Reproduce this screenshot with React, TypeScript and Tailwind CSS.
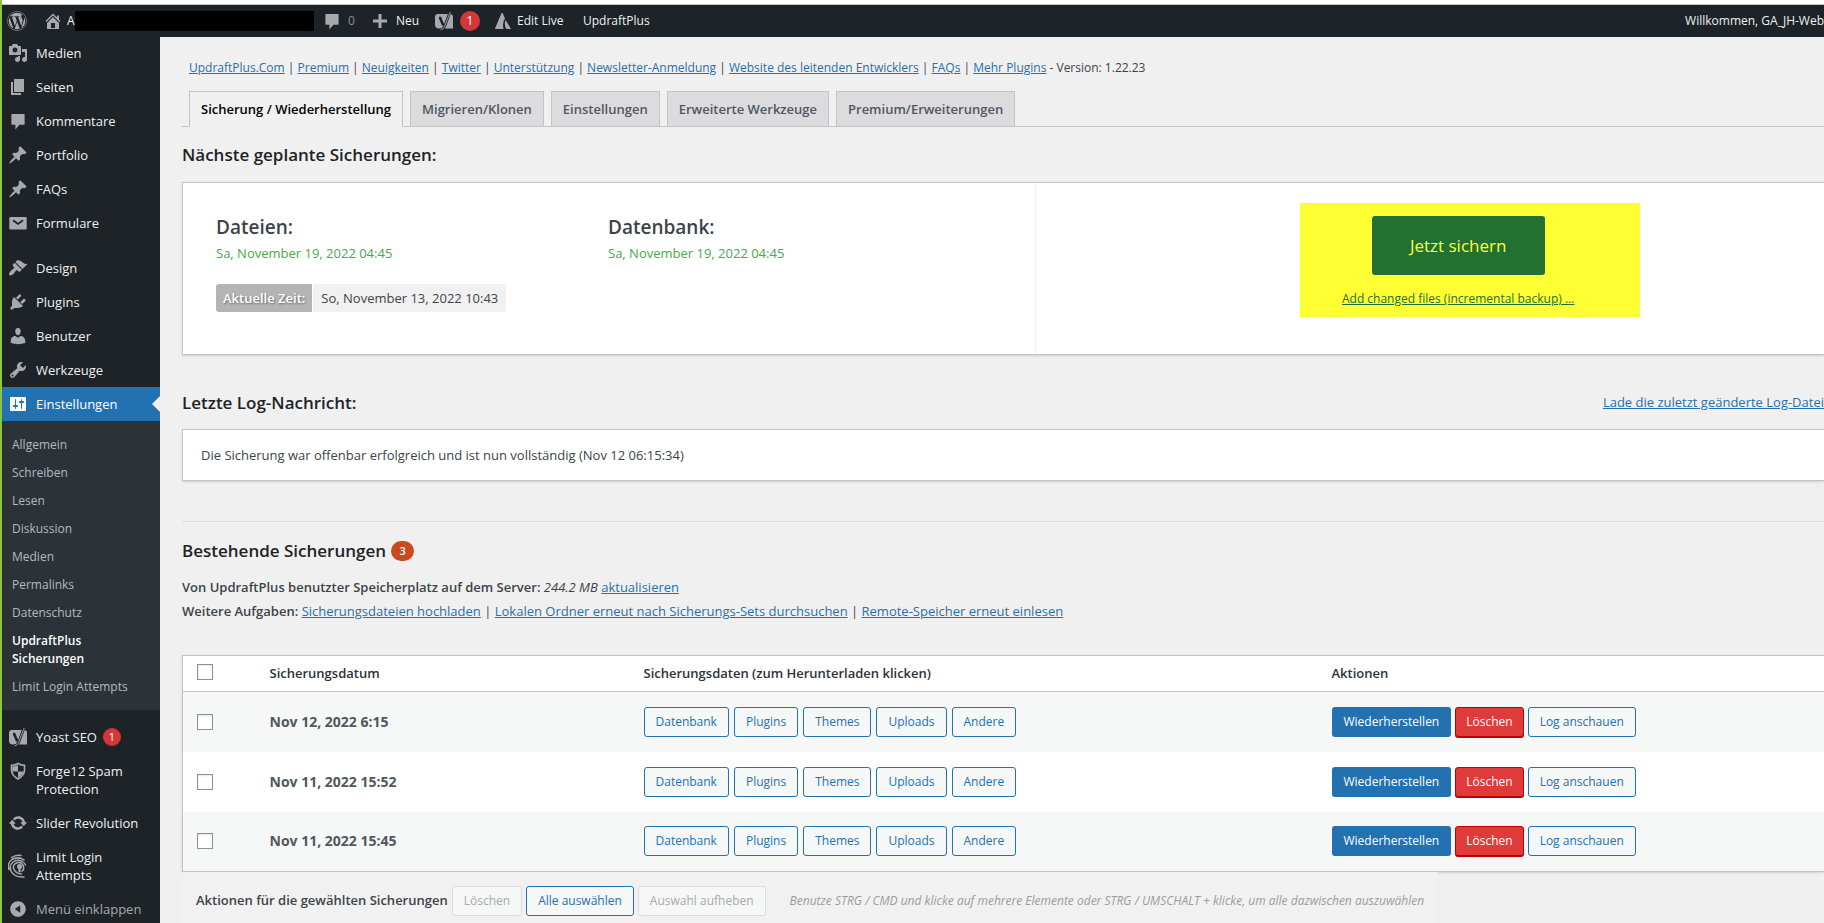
import React from 'react'
import { FaWordpress } from 'react-icons/fa'

const icons: Record<string, string> = {
  media: 'M13 11V4c0-.55-.45-1-1-1h-1.67L9 1H5L3.67 3H2c-.55 0-1 .45-1 1v7c0 .55.45 1 1 1h10c.55 0 1-.45 1-1zM7 4.5c1.38 0 2.5 1.12 2.5 2.5S8.38 9.5 7 9.5 4.5 8.38 4.5 7 5.62 4.5 7 4.5zM14 6h5v10.5c0 1.38-1.12 2.5-2.5 2.5S14 17.88 14 16.5s1.12-2.5 2.5-2.5c.17 0 .34.02.5.05V9h-3V6zm-4 8.05V13h2v3.5c0 1.38-1.12 2.5-2.5 2.5S7 17.88 7 16.5 8.12 14 9.5 14c.17 0 .34.02.5.05z',
  page: 'M6 15V2h10v13H6zm-1 1h8v2H3V5h2v11z',
  comment: 'M4 3h12q.6 0 .6.6V13q0 .8-.8.8H11.500L7.400 18.500V13.800H4.200Q3.400 13.800 3.400 13V3.600Q3.400 3 4 3z',
  pin: 'M10.44 3.02l1.82-1.82 6.36 6.35-1.83 1.82c-1.05-.68-2.48-.57-3.41.36l-.75.75c-.92.93-1.04 2.35-.35 3.41l-1.83 1.82-2.41-2.41-2.8 2.79c-.42.42-3.38 2.71-3.8 2.29s1.86-3.39 2.28-3.81l2.79-2.79L4.1 9.36l1.83-1.82c1.05.69 2.48.57 3.4-.36l.75-.75c.93-.92 1.05-2.35.36-3.41z',
  brush: 'M14.48 11.06L7.41 3.99l1.5-1.5c.5-.56 2.3-.47 3.51.32 1.21.8 1.43 1.28 2.91 2.1 1.18.64 2.45 1.26 4.45.85zm-.71.71L6.7 4.7 4.93 6.47c-.39.39-.39 1.02 0 1.41l1.06 1.06c.39.39.39 1.03 0 1.42-.6.6-1.43 1.11-2.21 1.69-.35.26-.7.53-1.01.84C1.43 14.23.4 16.08 1.4 17.07c.99 1 2.84-.03 4.18-1.36.31-.31.58-.66.85-1.02.57-.78 1.08-1.61 1.69-2.21.39-.39 1.02-.39 1.41 0l1.06 1.06c.39.39 1.02.39 1.41 0z',
  plug: 'M13.11 4.36L9.87 7.6 8 5.73l3.24-3.24c.35-.34 1.05-.2 1.56.32.52.51.66 1.21.31 1.55zm-8 1.77l.91-1.12 9.01 9.01-1.19.84c-.71.71-2.63 1.16-3.82 1.16H6.14L4.9 17.26c-.59.59-1.54.59-2.12 0-.59-.58-.59-1.53 0-2.12l1.24-1.24v-3.88c0-1.13.4-3.19 1.09-3.89zm7.26 3.97l3.24-3.24c.34-.35 1.04-.21 1.55.31.52.51.66 1.21.31 1.55l-3.24 3.25z',
  user: 'M10 9.25c-2.27 0-2.73-3.44-2.73-3.44C7 4.02 7.82 2 9.97 2c2.16 0 2.98 2.02 2.71 3.81 0 0-.41 3.44-2.68 3.44zm0 2.57L12.72 10c2.39 0 4.52 2.33 4.52 4.53v2.49s-3.65 1.13-7.24 1.13c-3.65 0-7.24-1.13-7.24-1.13v-2.49c0-2.25 1.94-4.48 4.47-4.48z',
  wrench: 'M16.68 9.77c-1.34 1.34-3.3 1.67-4.95.99l-5.41 6.52c-.99.99-2.59.99-3.58 0s-.99-2.59 0-3.57l6.52-5.42c-.68-1.65-.35-3.61.99-4.95 1.28-1.28 3.12-1.62 4.72-1.06l-2.89 2.89 2.82 2.82 2.86-2.87c.53 1.58.18 3.39-1.08 4.65zM3.81 16.21c.4.39 1.04.39 1.43 0 .4-.4.4-1.04 0-1.43-.39-.4-1.03-.4-1.43 0-.39.39-.39 1.03 0 1.43z',
  settings: 'M18 16V4c0-.55-.45-1-1-1H3c-.55 0-1 .45-1 1v12c0 .55.45 1 1 1h14c.55 0 1-.45 1-1zM8 11h1c.55 0 1 .45 1 1s-.45 1-1 1H8v1.500c0 .28-.22.5-.5.5s-.5-.22-.5-.5V13H6c-.55 0-1-.45-1-1s.45-1 1-1h1V5.500c0-.28.22-.5.5-.5s.5.22.5.5V11zm5-2h-1c-.55 0-1-.45-1-1s.45-1 1-1h1V5.500c0-.28.22-.5.5-.5s.5.22.5.5V7h1c.55 0 1 .45 1 1s-.45 1-1 1h-1v5.500c0 .28-.22.5-.5.5s-.5-.22-.5-.5V9z',
  home: 'M16 8.500l1.530 1.530-1.060 1.060L10 4.600l-6.470 6.470-1.060-1.060L10 2.500l4 4v-2h2v4zm-6-2.460l6 5.990V18H4v-5.970zM12 17v-5H8v5h4z',
  plus: 'M17 8.500v3h-5.500V17h-3v-5.500H3v-3h5.500V3h3v5.500z',
  update: 'M10.2 3.28c3.53 0 6.43 2.61 6.92 6h2.08l-3.5 4-3.5-4h2.32c-.45-1.97-2.21-3.45-4.32-3.45-1.45 0-2.73.71-3.54 1.78L4.95 5.66C6.23 4.2 8.11 3.28 10.2 3.28zm-.4 13.44c-3.52 0-6.43-2.61-6.92-6H.8l3.5-4c1.17 1.33 2.33 2.67 3.5 4H5.48c.45 1.97 2.21 3.45 4.32 3.45 1.45 0 2.73-.71 3.54-1.78l1.71 1.95c-1.28 1.46-3.15 2.38-5.25 2.38z',
  collapse: 'M10 2.200c4.300 0 7.800 3.500 7.800 7.800s-3.500 7.800-7.800 7.800S2.200 14.300 2.200 10 5.700 2.200 10 2.200zM12.200 6.200L6.800 10l5.400 3.800V6.200z',
  avada: 'M8.600 2h1L12 7.500Q9 11 10.500 18H1.800zM12.600 9l5.400 9h-4.500Q10.600 14 12.600 9z',
}

const Icon: React.FC<{ name: string }> = ({ name }) => {
  if (name === 'mail') {
    return (
      <svg viewBox="0 0 20 20" className="h-5 w-5 shrink-0">
        <rect x="1.300" y="4" width="17.400" height="12.400" rx="1" fill="currentColor" />
        <path d="M5 7.200l5 3.800 5-3.800" fill="none" stroke="#1d2327" strokeWidth="1.700" />
      </svg>
    )
  }
  if (name === 'yoast') {
    return (
      <svg viewBox="0 0 20 20" className="h-5 w-5 shrink-0">
        <path d="M4 3h12q3 0 3 3v11.500H5q-4 0-4-4V6q0-3 3-3z" fill="currentColor" />
        <path d="M5 7h1.200l3 7.200M16.200.5L11 14.500q-1.500 4-5 4.500" fill="none" stroke="#1d2327" strokeWidth="2.600" />
        <path d="M16.300.8L10.600 15.500q-1.300 3-4 3.400" fill="none" stroke="currentColor" strokeWidth=".9" />
      </svg>
    )
  }
  if (name === 'shield') {
    return (
      <svg viewBox="0 0 20 20" className="h-5 w-5 shrink-0">
        <path d="M10 2.500q3 1.800 6.500 1.800v5q0 5-6.500 8.700-6.500-3.700-6.500-8.700v-5Q7 4.300 10 2.500z" fill="none" stroke="currentColor" strokeWidth="1.600" />
        <path d="M10 5v5.500H4.300v-5Q8 5.200 10 4zM10 10.500h5.500q-1 4-5.500 6z" fill="currentColor" />
      </svg>
    )
  }
  if (name === 'limit') {
    return (
      <svg viewBox="0 0 20 24" className="h-6 w-5 shrink-0" fill="none" stroke="currentColor" strokeWidth="1.500" strokeLinecap="round">
        <path d="M3.500 3.500Q8 .2 13 1.500M1 15.500Q-1 9 4 5.500Q10 2 16 6M16 23q-10 .5-13-6Q1 11 5 8q5-3.500 10 0 1.500 1 2.500 3M13.500 20q-5.500-.5-7.500-4.500-2-5 3-6.800 5-1 6.500 3.800.5 4-1.500 4.500" />
        <circle cx="11.500" cy="12.500" r="2.500" fill="currentColor" stroke="none" />
        <path d="M11.500 13v4.500" strokeWidth="2.200" />
      </svg>
    )
  }
  return (
    <svg viewBox="0 0 20 20" className="h-5 w-5 shrink-0" fill="currentColor" fillRule="evenodd">
      <path d={icons[name]} />
    </svg>
  )
}

interface MenuItemProps {
  icon: string;
  text: string;
  badge?: string;
}

const MenuItem: React.FC<MenuItemProps> = ({ icon, text, badge }) => (
  <li>
    <a href="#" className="flex gap-2 py-2 pl-1.5 pr-2 text-[#f0f0f1]">
      <span className={icon === 'limit' ? 'flex items-center text-[#a7aaad]' : '-my-px flex h-5 items-center text-[#a7aaad]'}><Icon name={icon} /></span>
      <span className="whitespace-pre-line">{text}</span>
      {badge && <span className="-ml-0.5 h-[18px] w-[18px] rounded-full bg-[#d63638] text-center text-[11px] text-white">{badge}</span>}
    </a>
  </li>
)

const menuTop = [
  { icon: 'media', text: 'Medien' },
  { icon: 'page', text: 'Seiten' },
  { icon: 'comment', text: 'Kommentare' },
  { icon: 'pin', text: 'Portfolio' },
  { icon: 'pin', text: 'FAQs' },
  { icon: 'mail', text: 'Formulare' },
]
const menuMiddle = [
  { icon: 'brush', text: 'Design' },
  { icon: 'plug', text: 'Plugins' },
  { icon: 'user', text: 'Benutzer' },
  { icon: 'wrench', text: 'Werkzeuge' },
]
const menuBottom = [
  { icon: 'yoast', text: 'Yoast SEO', badge: '1' },
  { icon: 'shield', text: 'Forge12 Spam\nProtection' },
  { icon: 'update', text: 'Slider Revolution' },
  { icon: 'limit', text: 'Limit Login\nAttempts' },
]
const subMenu = ['Allgemein', 'Schreiben', 'Lesen', 'Diskussion', 'Medien', 'Permalinks', 'Datenschutz', 'UpdraftPlus\nSicherungen', 'Limit Login Attempts']

const Sidebar = () => (
  <nav className="-mt-px w-[158px] shrink-0 bg-[#1d2327] text-[13px] leading-[18px]">
    <ul>{menuTop.map((item) => <MenuItem key={item.text} {...item} />)}</ul>
    <ul className="pt-[11px]">{menuMiddle.map((item) => <MenuItem key={item.text} {...item} />)}</ul>
    <a href="#" className="relative flex gap-2 bg-[#2271b1] py-2 pl-1.5 text-white">
      <span className="-my-px flex h-5 items-center"><Icon name="settings" /></span>
      <span>Einstellungen</span>
      <span className="absolute right-0 top-[9px] border-y-8 border-r-8 border-y-transparent border-r-[#f0f0f1]" />
    </a>
    <ul className="bg-[#2c3338] pt-[10px] pb-[9px] text-xs leading-[18px] text-[#b4b9be]">
      {subMenu.map((text) => (
        <li key={text}>
          <a href="#" className={text.startsWith('Updraft') ? 'block whitespace-pre-line py-[5px] pl-2.5 font-semibold text-white' : 'block py-[5px] pl-2.5'}>{text}</a>
        </li>
      ))}
    </ul>
    <ul className="pt-2.5">{menuBottom.map((item) => <MenuItem key={item.text} {...item} />)}</ul>
    <button className="flex w-full gap-2 py-2 pl-1.5 text-left text-[#a7aaad]">
      <span className="-my-px flex h-5 items-center"><Icon name="collapse" /></span>
      <span>Menü einklappen</span>
    </button>
  </nav>
)

const AdminBar = () => (
  <header className="flex h-8 shrink-0 items-center overflow-hidden whitespace-nowrap bg-[#1d2327] pl-[5px] text-xs text-[#f0f0f1]">
    <a href="#" aria-label="WordPress" className="w-9 text-[#a7aaad]"><FaWordpress size={20} /></a>
    <a href="#" className="flex w-[273px] items-center text-[#a7aaad]">
      <Icon name="home" />
      <span className="ml-1 w-2 text-[#f0f0f1]">A</span>
      <span className="h-5 w-[239px] bg-black" />
    </a>
    <a href="#" className="ml-1.5 flex w-12 items-center gap-1.5 text-[#a7aaad]"><Icon name="comment" /><span className="text-[#8c8f94]">0</span></a>
    <a href="#" className="flex w-[64px] items-center gap-1.5"><span className="text-[#a7aaad]"><Icon name="plus" /></span>Neu</a>
    <a href="#" className="flex w-[59px] items-center gap-1.5">
      <span className="text-[#a7aaad]"><Icon name="yoast" /></span>
      <span className="h-5 w-5 rounded-full bg-[#d63638] text-center leading-5 text-white">1</span>
    </a>
    <a href="#" className="flex w-[90px] items-center gap-1"><span className="text-[#a7aaad]"><Icon name="avada" /></span>Edit Live</a>
    <a href="#">UpdraftPlus</a>
    <a href="#" className="ml-auto">Willkommen, GA_JH-Web</a>
  </header>
)

const headerLinks = ['UpdraftPlus.Com', 'Premium', 'Neuigkeiten', 'Twitter', 'Unterstützung', 'Newsletter-Anmeldung', 'Website des leitenden Entwicklers', 'FAQs', 'Mehr Plugins']
const tabs = ['Sicherung / Wiederherstellung', 'Migrieren/Klonen', 'Einstellungen', 'Erweiterte Werkzeuge', 'Premium/Erweiterungen']
const backups = ['Nov 12, 2022 6:15', 'Nov 11, 2022 15:52', 'Nov 11, 2022 15:45']
const parts = ['Datenbank', 'Plugins', 'Themes', 'Uploads', 'Andere']

const linkClass = 'text-[#2271b1] underline'
const outlineButton = 'h-[30px] rounded-[3px] border border-[#2271b1] bg-[#f6f7f7] px-[11px] text-xs text-[#2271b1]'
const disabledButton = 'h-[30px] rounded-[3px] border border-[#dcdcde] bg-[#f6f7f7] px-[11px] text-xs text-[#a7aaad]'
const checkboxClass = 'block h-4 w-4 appearance-none border border-[#8c8f94] bg-white shadow-[inset_0_1px_2px_rgba(0,0,0,0.1)]'
const headingClass = 'text-[17px] leading-7 font-semibold text-[#1d2327]'

const NextBackups = () => (
  <section className="flex h-[173px] border border-r-0 border-[#c3c4c7] bg-white shadow-sm">
    <div className="w-[52%] border-r border-[#f0f0f1] pl-[33px] pt-[30px]">
      <div className="flex">
        <div className="w-[392px]">
          <h3 className="text-[19px] leading-7 font-semibold text-[#3c434a]">Dateien:</h3>
          <p className="leading-6 text-[#46a84b]">Sa, November 19, 2022 04:45</p>
        </div>
        <div>
          <h3 className="text-[19px] leading-7 font-semibold text-[#3c434a]">Datenbank:</h3>
          <p className="leading-6 text-[#46a84b]">Sa, November 19, 2022 04:45</p>
        </div>
      </div>
      <div className="mt-[19px] flex gap-px leading-7">
        <span className="rounded-l-[3px] bg-[#b4b4b4] px-[7px] font-semibold text-white [text-shadow:1px_1px_2px_rgba(0,0,0,0.4)]">Aktuelle Zeit:</span>
        <span className="rounded-r-[3px] bg-[#f1f1f1] px-2">So, November 13, 2022 10:43</span>
      </div>
    </div>
    <div className="flex flex-1 items-start justify-center pl-20 pt-5">
      <div className="flex h-[114px] w-[340px] flex-col items-center bg-[#ffff33] pr-6 pt-[13px]">
        <button className="h-[59px] w-[173px] rounded-[3px] bg-[#227133] text-[17px] text-[#ffff33]">Jetzt sichern</button>
        <a href="#" className="mt-3 text-xs leading-6 text-[#227133] underline">Add changed files (incremental backup) ...</a>
      </div>
    </div>
  </section>
)

const BackupTable = () => (
  <table className="w-full table-fixed border border-r-0 border-[#c3c4c7] bg-white text-left shadow-sm">
    <colgroup>
      <col className="w-[87px]" />
      <col className="w-[374px]" />
      <col className="w-[688px]" />
      <col />
    </colgroup>
    <thead>
      <tr className="h-9 border-b border-[#c3c4c7] text-[#2c3338]">
        <th className="pt-2 pl-3.5 align-top"><input type="checkbox" aria-label="Alle auswählen" className={checkboxClass} /></th>
        <th className="font-semibold">Sicherungsdatum</th>
        <th className="font-semibold">Sicherungsdaten (zum Herunterladen klicken)</th>
        <th className="font-semibold">Aktionen</th>
      </tr>
    </thead>
    <tbody>
      {backups.map((date) => (
        <tr key={date} className="h-[60px] odd:bg-[#f6f7f7]">
          <td className="pl-3.5"><input type="checkbox" aria-label={date} className={checkboxClass} /></td>
          <td className="text-sm font-bold text-[#50575e]">{date}</td>
          <td>
            <div className="flex gap-[5px]">
              {parts.map((part) => <button key={part} className={outlineButton}>{part}</button>)}
            </div>
          </td>
          <td>
            <div className="flex gap-1">
              <button className="h-[30px] rounded-[3px] bg-[#2271b1] px-3 text-xs text-white">Wiederherstellen</button>
              <button className="h-[30px] rounded-[3px] border border-[#c00000] bg-[#df3b3b] px-2.5 text-xs text-white shadow-[0_1px_0_#c00000]">Löschen</button>
              <button className={outlineButton}>Log anschauen</button>
            </div>
          </td>
        </tr>
      ))}
    </tbody>
  </table>
)

const App = () => {
  return (
    <div className="flex h-screen flex-col overflow-hidden border-l-2 border-[#8cc63f] bg-[#f0f0f0] font-['Open_Sans','Noto_Sans',sans-serif] text-[13px] text-[#3c434a]">
      <div className="h-[5px] shrink-0 border-b border-[#c4c4c4] bg-white" />
      <AdminBar />
      <div className="flex min-h-0 flex-1">
        <Sidebar />
        <main className="min-w-0 flex-1 whitespace-nowrap pl-[22px]">
          <p className="pl-[7px] pt-[21px] text-xs leading-5">
            {headerLinks.map((text, i) => (
              <React.Fragment key={text}>
                {i > 0 && ' | '}
                <a href="#" className={linkClass}>{text}</a>
              </React.Fragment>
            ))}
            {' - Version: 1.22.23'}
          </p>
          <div className="mt-[13px] flex gap-[7px] border-b border-[#c3c4c7] pl-[7px] font-semibold">
            {tabs.map((tab, i) => (
              <a key={tab} href="#" className={i === 0
                ? '-mb-px h-9 border border-b-0 border-[#c3c4c7] bg-[#f0f0f0] px-[11px] leading-[34px] text-black'
                : 'h-[35px] border border-b-0 border-[#c3c4c7] bg-[#dcdcde] px-[11px] leading-[34px] text-[#50575e]'}>{tab}</a>
            ))}
          </div>
          <h2 className={`pt-3.5 pb-[13px] ${headingClass}`}>Nächste geplante Sicherungen:</h2>
          <NextBackups />

          <div className="flex items-center justify-between pt-[34px] pb-3">
            <h2 className={headingClass}>Letzte Log-Nachricht:</h2>
            <a href="#" className={linkClass}>Lade die zuletzt geänderte Log-Datei</a>
          </div>
          <p className="border border-r-0 border-[#c3c4c7] bg-white py-3 pl-[18px] leading-[26px] shadow-sm">Die Sicherung war offenbar erfolgreich und ist nun vollständig (Nov 12 06:15:34)</p>

          <hr className="mt-10 border-[#dcdcde]" />
          <h2 className={`flex items-center gap-[5px] pt-[15px] ${headingClass}`}>
            Bestehende Sicherungen
            <span className="h-5 w-[23px] rounded-full bg-[#ca4a1f] text-center text-[11px] leading-5 font-semibold text-white">3</span>
          </h2>
          <p className="pt-2.5 leading-6">
            <b className="font-semibold">Von UpdraftPlus benutzter Speicherplatz auf dem Server:</b> <i>244.2 MB</i> <a href="#" className={linkClass}>aktualisieren</a>
          </p>
          <p className="pb-8 leading-6">
            <b className="font-semibold">Weitere Aufgaben:</b> <a href="#" className={linkClass}>Sicherungsdateien hochladen</a> | <a href="#" className={linkClass}>Lokalen Ordner erneut nach Sicherungs-Sets durchsuchen</a> | <a href="#" className={linkClass}>Remote-Speicher erneut einlesen</a>
          </p>
          <BackupTable />
          <div className="flex w-fit items-center gap-1 bg-[#f1f1f1] px-3.5 py-3.5">
            <b className="font-semibold">Aktionen für die gewählten Sicherungen</b>
            <button disabled className={disabledButton}>Löschen</button>
            <button className={outlineButton}>Alle auswählen</button>
            <button disabled className={disabledButton}>Auswahl aufheben</button>
            <i className="ml-5 text-xs text-[#999ca0]">Benutze STRG / CMD und klicke auf mehrere Elemente oder STRG / UMSCHALT + klicke, um alle dazwischen auszuwählen</i>
          </div>
        </main>
      </div>
    </div>
  )
}

export default App
